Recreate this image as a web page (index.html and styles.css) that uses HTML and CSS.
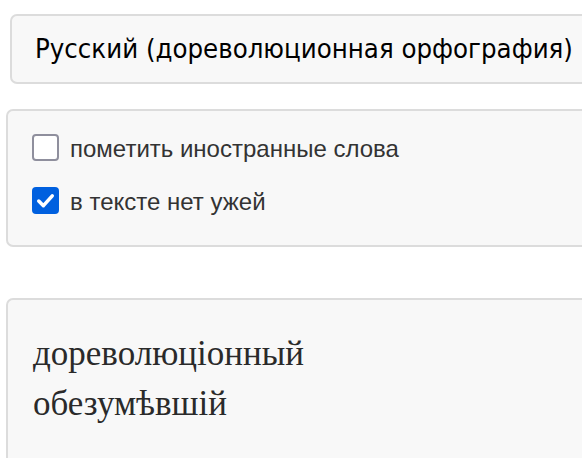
FILE: index.html
```html
<!DOCTYPE html>
<html lang="ru">
<head>
<meta charset="utf-8">
<title>Дореформенная орфография</title>
<link rel="stylesheet" href="styles.css">
</head>
<body>
<div class="page">
  <div class="select">Русский (дореволюционная орфография)</div>
  <div class="options">
    <label class="option">
      <span class="box"></span>
      <span class="label-text">пометить иностранные слова</span>
    </label>
    <label class="option">
      <span class="box checked">
        <svg width="27" height="27" viewBox="0 0 26 26"><path d="M6.5 13.5 L11 18 L19.5 8.5" fill="none" stroke="#fff" stroke-width="3.4" stroke-linecap="round" stroke-linejoin="round"/></svg>
      </span>
      <span class="label-text">в тексте нет ужей</span>
    </label>
  </div>
  <div class="output">
    <div class="line">дореволюціонный</div>
    <div class="line">обезумѣвшій</div>
  </div>
</div>
</body>
</html>
```
FILE: styles.css
```css
html, body {
  margin: 0;
  padding: 0;
  background: #ffffff;
  overflow: hidden;
}
.page {
  padding: 14px 0 0 6px;
  display: flex;
  flex-direction: column;
  align-items: flex-start;
}
.select {
  margin-left: 4px;
  width: 640px;
  height: 70px;
  box-sizing: border-box;
  border: 2px solid #dcdcdc;
  border-radius: 7px;
  background: #f8f8f8;
  padding: 0 0 2px 23px;
  display: flex;
  align-items: center;
  font-family: "DejaVu Sans Condensed", "DejaVu Sans", sans-serif;
  font-size: 27.3px;
  color: #000;
  white-space: nowrap;
}
.options {
  margin-top: 25px;
  width: 640px;
  height: 138px;
  box-sizing: border-box;
  border: 2px solid #dcdcdc;
  border-radius: 7px;
  background: #f8f8f8;
  padding: 23px 0 0 24px;
  display: flex;
  flex-direction: column;
  gap: 26px;
}
.option {
  display: flex;
  align-items: center;
  gap: 11px;
  font-family: "Liberation Sans", Arial, sans-serif;
  font-size: 24px;
  line-height: 27px;
  color: #333;
  white-space: nowrap;
}
.box {
  width: 27px;
  height: 27px;
  box-sizing: border-box;
  border: 2px solid #8f8f9d;
  border-radius: 4px;
  background: #fff;
  flex: none;
  display: flex;
}
.box.checked {
  border: none;
  background: #0060df;
}
.label-text {
  position: relative;
  top: 1px;
}
.output {
  margin-top: 51px;
  width: 640px;
  height: 200px;
  box-sizing: border-box;
  border: 2px solid #dcdcdc;
  border-radius: 7px;
  background: #f8f8f8;
  padding: 29px 0 0 25px;
  font-family: "Liberation Serif", "Times New Roman", serif;
  font-size: 35px;
  line-height: 50px;
  color: #2a2a2a;
}
```
